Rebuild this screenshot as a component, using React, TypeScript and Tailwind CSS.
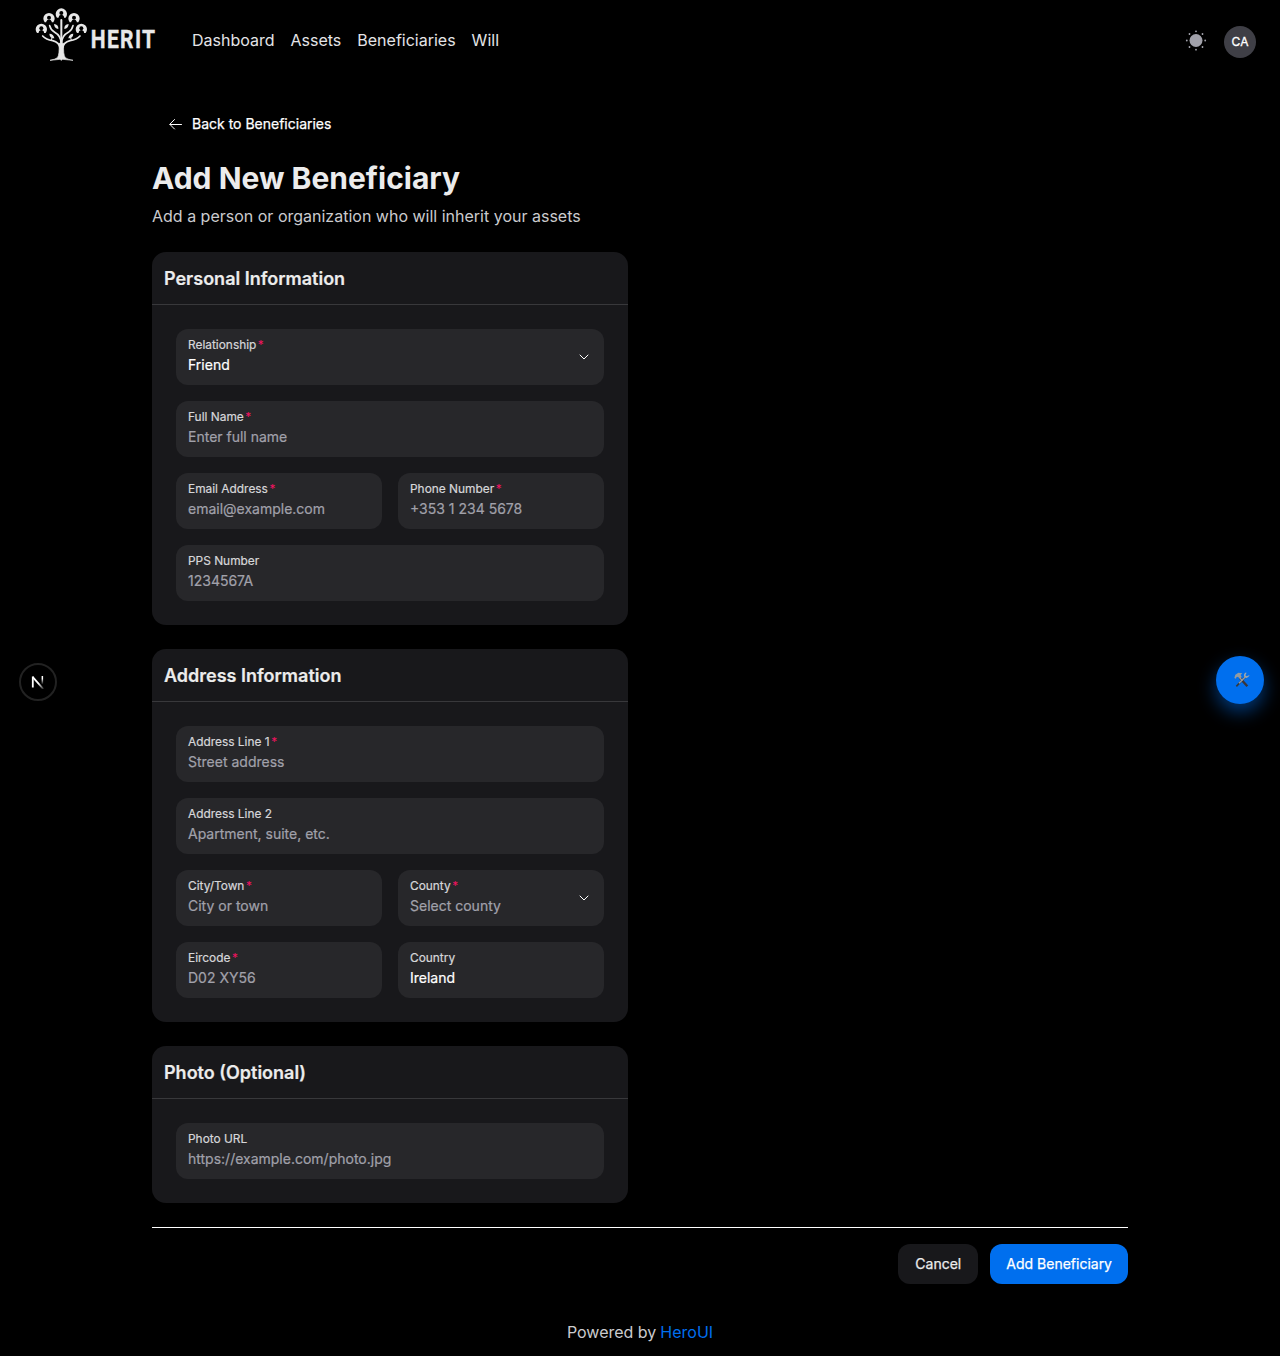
import React from "react";

function Person({ x, y }: { x: number; y: number }) {
  return (
    <g transform={`translate(${x} ${y})`}>
      <path d="M-13 12A17 17 0 1 1 13 12L8 12Q7 4 0 4T-8 12Z" fill="#e8e8e8" />
      <circle cx="0" cy="-2" r="6" fill="#000" />
      <path d="M-8 13Q-8 4 0 4T8 13Z" fill="#000" />
    </g>
  );
}

function Logo() {
  return (
    <svg width="140" height="70" viewBox="0 0 420 210" className="block shrink-0">
      <g fill="none" stroke="#e8e8e8" strokeWidth="5" strokeLinecap="round">
        <path d="M112 60V150" strokeWidth="6" />
        <path d="M77 77Q80 90 92 97Q110 107 111 128" />
        <path d="M147 77Q144 90 133 97Q114 107 113 128" />
        <path d="M56 108Q66 119 86 122Q106 127 109 146" />
        <path d="M168 108Q158 119 138 122Q118 127 115 146" />
        <path d="M84 113L82 120M140 113L142 120" strokeWidth="3" />
      </g>
      <path d="M105 130Q107 165 100 173Q94 178 78 181L108 178L112 181L116 178L147 181Q130 178 124 173Q117 165 119 130Z" fill="#e8e8e8" stroke="#e8e8e8" strokeWidth="2" />
      <g fill="#e8e8e8">
        <path d="M90 72Q104 73 103 87Q91 86 90 72Z" />
        <path d="M134 72Q120 73 121 87Q133 86 134 72Z" />
        <path d="M76 101Q89 101 91 115Q77 115 76 101Z" />
        <path d="M148 101Q135 101 133 115Q147 115 148 101Z" />
      </g>
      <Person x={112} y={41} />
      <Person x={75} y={55} />
      <Person x={150} y={55} />
      <Person x={52} y={87} />
      <Person x={172} y={87} />
      <g transform="translate(200 143) scale(0.82 1)">
        <text x="0" y="0" fill="#e8e8e8" stroke="#e8e8e8" strokeWidth="1" fontFamily="Roboto, sans-serif" fontWeight="700" fontSize="77" textLength="236" lengthAdjust="spacing">
          HERIT
        </text>
      </g>
    </svg>
  );
}

function Chevron() {
  return (
    <svg width="16" height="16" viewBox="0 0 24 24" fill="none" stroke="#fff" strokeWidth="1.5" strokeLinecap="round" strokeLinejoin="round" className="shrink-0">
      <path d="m6 9 6 6 6-6" />
    </svg>
  );
}

type FieldProps = {
  label: string;
  required?: boolean;
  placeholder?: string;
  value?: string;
  select?: boolean;
};

function Field({ label, required, placeholder, value, select }: FieldProps) {
  return (
    <div className="flex h-14 w-full min-w-0 items-center justify-between rounded-xl bg-[#27272a] px-3">
      <div className="flex min-w-0 flex-col pb-0.5 [-webkit-text-stroke:0.2px]">
        <span className="text-[11.9px] leading-4 text-[#d6d6d9]">
          {label}
          {required && <span className="ml-[1.5px] text-[#f31260] [-webkit-text-stroke:0px]">*</span>}
        </span>
        <span className={value ? "mt-0.5 text-sm leading-5 text-white" : "mt-0.5 text-sm leading-5 text-[#a1a1aa]"}>
          {value ?? placeholder}
        </span>
      </div>
      {select && <Chevron />}
    </div>
  );
}

function Card({ title, children }: { title: string; children: React.ReactNode }) {
  return (
    <section className="w-[476px] rounded-[14px] bg-[#18181b]">
      <h2 className="flex h-[53px] items-center border-b border-[#38383b] px-3 pt-0.5 text-lg font-semibold text-[#ececec] [-webkit-text-stroke:0.2px]">{title}</h2>
      <div className="flex flex-col gap-4 p-6">{children}</div>
    </section>
  );
}

function Sun() {
  const rays = [0, 45, 90, 135, 180, 225, 270, 315];
  return (
    <svg width="22" height="22" viewBox="0 0 22 22" fill="#a1a1aa">
      <circle cx="11" cy="10.5" r="6.5" />
      {rays.map((a) => (
        <circle key={a} cx="11" cy="1.3" r="0.9" transform={`rotate(${a} 11 10.5)`} />
      ))}
    </svg>
  );
}

function Tools() {
  return (
    <svg width="16" height="16" viewBox="0 0 48 48" fill="none">
      <path d="M17 17L40 43" stroke="#39363a" strokeWidth="7" />
      <path d="M7 43L35 14" stroke="#34383d" strokeWidth="5" />
      <path d="M15 34L33 16" stroke="#929ba2" strokeWidth="4" />
      <path d="M1 18L4 8L13 2L25 4L20 9L23 15L17 20L12 14L7 16L6 20Z" fill="#939ba1" />
      <path d="M33 2Q27 9 31 16Q41 22 47 9L38 13L34 10L38 2Z" fill="#a0a7ab" />
      <path d="M18 18L25 26" stroke="#a09b98" strokeWidth="4" />
    </svg>
  );
}

export default function App() {
  return (
    <div className="flex h-[1356px] w-full flex-col bg-black font-['Inter',sans-serif] text-[#ececec]">
      <header className="flex h-20 items-start justify-between px-6">
        <div className="flex">
          <Logo />
          <nav className="ml-7 flex h-20 items-center gap-4 text-base text-[#e4e4e7]">
            <a>Dashboard</a>
            <a>Assets</a>
            <a>Beneficiaries</a>
            <a>Will</a>
          </nav>
        </div>
        <div className="flex items-center gap-[17px] pt-[26px]">
          <div className="-mt-[2px]">
            <Sun />
          </div>
          <div className="flex size-8 items-center justify-center rounded-full bg-[#3f3f46] text-xs text-white [-webkit-text-stroke:0.3px]">CA</div>
        </div>
      </header>

      <main className="mx-auto flex w-[976px] flex-col pt-6">
        <button className="flex h-10 items-center gap-2 self-start px-4 text-sm text-white [-webkit-text-stroke:0.25px]">
          <svg width="16" height="16" viewBox="0 0 16 16" fill="none" stroke="#fff" strokeLinecap="round" strokeLinejoin="round">
            <path d="M13.5 8.5H2M6.5 3.5L1.8 8.3L6.5 13" />
          </svg>
          Back to Beneficiaries
        </button>
        <h1 className="mt-4 text-3xl leading-9 font-bold">Add New Beneficiary</h1>
        <p className="mt-2 text-base text-[#cbcbce]">Add a person or organization who will inherit your assets</p>

        <div className="mt-6 flex flex-col gap-6">
          <Card title="Personal Information">
            <Field label="Relationship" required value="Friend" select />
            <Field label="Full Name" required placeholder="Enter full name" />
            <div className="grid grid-cols-2 gap-4">
              <Field label="Email Address" required placeholder="email@example.com" />
              <Field label="Phone Number" required placeholder="+353 1 234 5678" />
            </div>
            <Field label="PPS Number" placeholder="1234567A" />
          </Card>
          <Card title="Address Information">
            <Field label="Address Line 1" required placeholder="Street address" />
            <Field label="Address Line 2" placeholder="Apartment, suite, etc." />
            <div className="grid grid-cols-2 gap-4">
              <Field label="City/Town" required placeholder="City or town" />
              <Field label="County" required placeholder="Select county" select />
            </div>
            <div className="grid grid-cols-2 gap-4">
              <Field label="Eircode" required placeholder="D02 XY56" />
              <Field label="Country" value="Ireland" />
            </div>
          </Card>
          <Card title="Photo (Optional)">
            <Field label="Photo URL" placeholder="https://example.com/photo.jpg" />
          </Card>
        </div>

        <div className="mt-6 flex justify-end gap-3 border-t border-white pt-4">
          <button className="h-10 min-w-20 rounded-xl bg-[#18181b] px-4 text-sm text-[#ececec] [-webkit-text-stroke:0.25px]">Cancel</button>
          <button className="h-10 rounded-xl bg-[#006fee] px-4 text-sm text-white [-webkit-text-stroke:0.25px]">Add Beneficiary</button>
        </div>
      </main>

      <footer className="mt-9 flex justify-center gap-1 text-base text-[#cbcbce]">
        <span>Powered by</span>
        <span className="text-[#006fee]">HeroUI</span>
      </footer>

      <div className="absolute top-[663px] left-[19px] flex size-[38px] items-center justify-center rounded-full border-2 border-[#222] bg-black">
        <svg width="14" height="14" viewBox="0 0 14 14" fill="none">
          <defs>
            <linearGradient id="stem" x1="0" y1="0" x2="0" y2="1">
              <stop offset="0.3" stopColor="#fff" />
              <stop offset="1" stopColor="#fff" stopOpacity="0" />
            </linearGradient>
            <linearGradient id="slash" gradientUnits="userSpaceOnUse" x1="8" y1="8" x2="13" y2="14">
              <stop stopColor="#fff" />
              <stop offset="1" stopColor="#fff" stopOpacity="0.1" />
            </linearGradient>
          </defs>
          <path d="M1.8 12.5V1.5" stroke="#fff" strokeWidth="1.8" />
          <path d="M1.6 1.8L12.3 14" stroke="url(#slash)" strokeWidth="1.8" />
          <rect x="10.6" y="1" width="1.5" height="8.5" fill="url(#stem)" />
        </svg>
      </div>
      <div className="absolute top-[656px] left-[1216px] flex size-12 items-center justify-center rounded-full bg-[#006fee] pl-[3px] shadow-[0_8px_18px_rgba(0,111,238,0.5)]">
        <Tools />
      </div>
    </div>
  );
}
